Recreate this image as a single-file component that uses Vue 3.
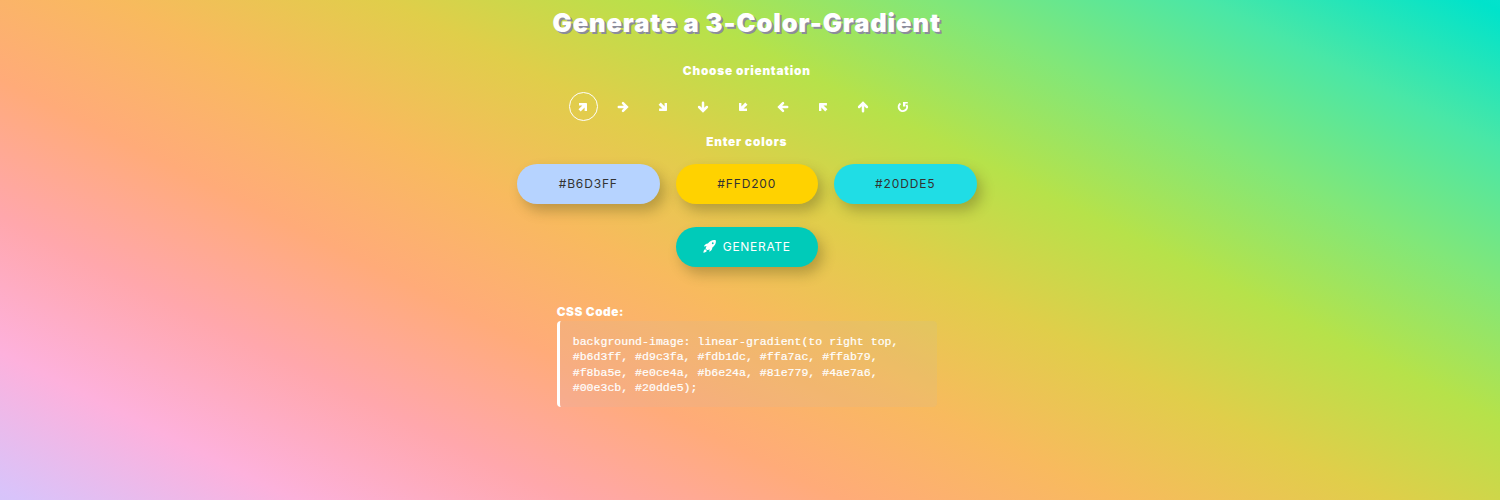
<script setup>
import { ref } from 'vue'

const orientations = [
  { name: 'right top', kind: 'diagonal', turn: 0 },
  { name: 'right', kind: 'straight', turn: 0 },
  { name: 'right bottom', kind: 'diagonal', turn: 90 },
  { name: 'bottom', kind: 'straight', turn: 90 },
  { name: 'left bottom', kind: 'diagonal', turn: 180 },
  { name: 'left', kind: 'straight', turn: 180 },
  { name: 'left top', kind: 'diagonal', turn: 270 },
  { name: 'top', kind: 'straight', turn: 270 },
  { name: 'circle', kind: 'circle', turn: 0 },
]
const selected = ref('right top')
const colors = ['#B6D3FF', '#FFD200', '#20DDE5']
const code = `background-image: linear-gradient(to right top,
#b6d3ff, #d9c3fa, #fdb1dc, #ffa7ac, #ffab79,
#f8ba5e, #e0ce4a, #b6e24a, #81e779, #4ae7a6,
#00e3cb, #20dde5);`
</script>

<template>
  <main class="page">
    <h1 class="title">Generate a 3-Color-Gradient</h1>
    <h2 class="label orientation-label">Choose orientation</h2>
    <div class="orientations">
      <button
        v-for="o in orientations"
        :key="o.name"
        class="direction"
        :class="{ active: o.name === selected }"
        :aria-label="o.name"
        @click="selected = o.name"
      >
        <svg width="12" height="12" viewBox="0 0 12 12">
          <g :transform="`rotate(${o.turn} 6 6)`">
            <path v-if="o.kind === 'straight'" class="stroke" d="M6 2.1 L9.9 6 L6 9.9 M9.4 6 H1.8" />
            <path v-else-if="o.kind === 'diagonal'" class="solid" d="M2 2 H9.2 Q10 2 10 2.8 V9.9 H7.6 V6.5 L3.7 10.4 L1.5 8.2 L5.4 4.4 H2 Z" />
            <template v-else>
              <path class="ring" d="M3.4 2.5 A4.2 4.2 0 1 0 9.6 3.9" />
              <path class="solid" d="M6 0.9 H10.8 V2.5 H8.4 V5.6 H6 Z" />
            </template>
          </g>
        </svg>
      </button>
    </div>
    <h2 class="label colors-label">Enter colors</h2>
    <div class="colors">
      <button v-for="(c, i) in colors" :key="c" class="pill" :class="`color-${i + 1}`">{{ c }}</button>
    </div>
    <button class="pill generate">
      <svg width="13" height="13" viewBox="0 0 512 512">
        <path fill="#fff" fill-rule="evenodd" d="M505 19c-1-6-6-11-12-12-120-20-220 30-300 130-65-5-110 30-150 95-8 12 0 22 14 20l82-12c-22 45-34 78-36 102l55 55c25-3 57-15 102-37l-12 82c-2 14 8 22 20 14 65-40 100-85 95-150 110-85 160-175 142-287zM384 163a35 35 0 1 1 0-70 35 35 0 0 1 0 70zM90 360c-42 8-66 50-76 138 80-10 125-30 138-76z" />
      </svg>
      <span>GENERATE</span>
    </button>
    <section class="output">
      <h2 class="label code-label">CSS Code:</h2>
      <pre class="code">{{ code }}</pre>
    </section>
  </main>
</template>

<style>
body { margin: 0; }
</style>

<style scoped>
.page {
  box-sizing: border-box;
  width: 1500px;
  height: 500px;
  padding: 5px 6.5px 0 0;
  overflow: hidden;
  display: flex;
  flex-direction: column;
  align-items: center;
  color: #fff;
  font-family: Inter, "Open Sans", sans-serif;
  background: linear-gradient(to right top, #b6d3ff, #d9c3fa, #fdb1dc, #ffa7ac, #ffab79, #f8ba5e, #e0ce4a, #b6e24a, #81e779, #4ae7a6, #00e3cb, #20dde5) 0 -125px / 1500px 750px no-repeat;
}
.title {
  margin: 0;
  font-size: 25.5px;
  line-height: 36px;
  font-weight: 900;
  letter-spacing: 0.9px;
  white-space: nowrap;
  text-shadow: 2px 2px 0 #8c8c9c;
}
.label {
  margin: 0;
  font-size: 11.8px;
  line-height: 16px;
  font-weight: 900;
  letter-spacing: 0.8px;
  white-space: nowrap;
}
.orientation-label { margin-top: 22px; }
.orientations {
  display: flex;
  gap: 11px;
  margin: 13px 0 0 -7px;
}
.direction {
  box-sizing: border-box;
  width: 29px;
  height: 29px;
  padding: 0;
  border: 1px solid transparent;
  border-radius: 50%;
  background: none;
  display: flex;
  align-items: center;
  justify-content: center;
}
.direction.active { border-color: #fff; }
.stroke { fill: none; stroke: #fff; stroke-width: 2.5; stroke-linecap: round; }
.ring { fill: none; stroke: #fff; stroke-width: 2; }
.solid { fill: #fff; }
.colors-label { margin-top: 13px; }
.colors { display: flex; gap: 16px; margin-top: 14px; }
.pill {
  box-sizing: border-box;
  width: 142.5px;
  height: 39.5px;
  padding: 0;
  border: 0;
  border-radius: 20px;
  font: 400 12px Inter, sans-serif;
  letter-spacing: 0.85px;
  color: #333;
  box-shadow: 5px 7px 13px rgba(80, 70, 20, 0.33);
}
.color-1 { background: #b6d3ff; }
.color-2 { background: #ffd200; }
.color-3 { background: #20dde5; }
.generate {
  flex-shrink: 0;
  margin-top: 23.5px;
  display: flex;
  align-items: center;
  justify-content: center;
  gap: 7px;
  background: #00cbb9;
  color: #fff;
  letter-spacing: 0.7px;
}
.output { width: 380px; margin-top: 37px; }
.code-label { letter-spacing: 0.55px; }
.code {
  box-sizing: border-box;
  width: 380px;
  height: 86px;
  margin: 1px 0 0;
  padding: 13px 0 0 13px;
  border-left: 3px solid #fff;
  border-radius: 4px;
  background: rgba(190, 190, 190, 0.12);
  color: #fff;
  font: 11.56px/15.5px "Liberation Mono", monospace;
  -webkit-text-stroke: 0.2px #fff;
}
</style>
